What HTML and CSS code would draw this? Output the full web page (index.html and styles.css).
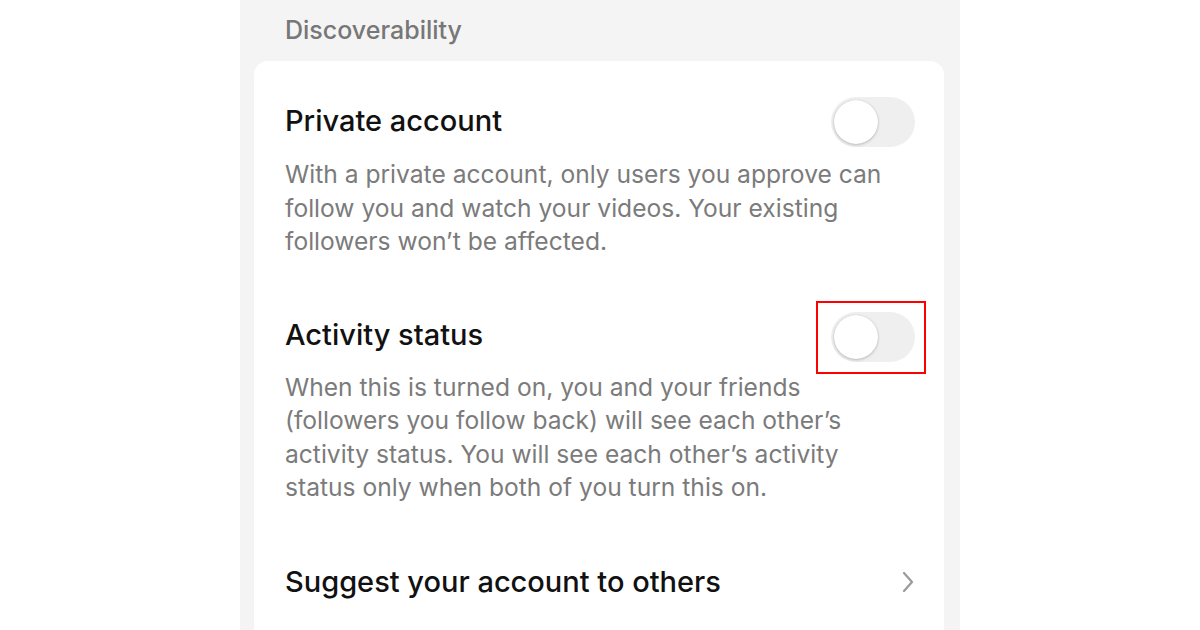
FILE: index.html
```html
<!DOCTYPE html>
<html lang="en">
<head>
<meta charset="utf-8">
<link rel="stylesheet" href="styles.css">
</head>
<body>
<div class="panel">
  <div class="section-title">Discoverability</div>
  <div class="card">
    <div class="item item-private">
      <div class="item-head">
        <div class="item-title">Private account</div>
        <div class="toggle"><span class="knob"></span></div>
      </div>
      <p class="item-desc">With a private account, only users you approve can follow you and watch your videos. Your existing followers won’t be affected.</p>
    </div>
    <div class="item item-activity">
      <div class="item-head">
        <div class="item-title">Activity status</div>
        <div class="highlight"><div class="toggle"><span class="knob"></span></div></div>
      </div>
      <p class="item-desc">When this is turned on, you and your friends (followers you follow back) will see each other’s activity status. You will see each other’s activity status only when both of you turn this on.</p>
    </div>
    <div class="item item-link">
      <div class="item-head">
        <div class="item-title">Suggest your account to others</div>
        <svg class="chevron" width="12" height="22" viewBox="0 0 12 22"><path d="M2 2 L10 11 L2 20" fill="none" stroke="#9a9a9a" stroke-width="2.2" stroke-linecap="round" stroke-linejoin="round"/></svg>
      </div>
    </div>
  </div>
</div>
</body>
</html>
```

FILE: styles.css
```css
html, body {
  margin: 0;
  padding: 0;
  background: #ffffff;
}
body {
  font-family: Inter, "Noto Sans", "Liberation Sans", sans-serif;
  height: 630px;
  overflow: hidden;
}
.panel {
  width: 720px;
  height: 630px;
  margin: 0 auto;
  background: #f4f4f4;
  padding: 0 16px 0 14px;
  box-sizing: border-box;
}
.section-title {
  padding: 15px 0 0 31px;
  font-size: 25px;
  line-height: 30px;
  font-weight: 500;
  color: #777777;
  height: 61px;
  box-sizing: border-box;
}
.card {
  background: #ffffff;
  border-radius: 14px;
  padding: 0 29px 0 31px;
  height: 600px;
}
.item-head {
  display: flex;
  align-items: center;
  justify-content: space-between;
}
.item-title {
  font-size: 29px;
  font-weight: 500;
  color: #111111;
}
.item-private .item-head {
  padding-top: 36px;
  height: 50px;
}
.item-private .item-title {
  margin-bottom: 4px;
}
.item-desc {
  margin: 11px 0 0 0;
  font-size: 24.6px;
  line-height: 33.5px;
  color: #7b7b7b;
  max-width: 630px;
}
.item-activity .item-head {
  margin-top: 51px;
  height: 50px;
}
.item-activity .item-desc {
  margin-top: 11px;
}
.toggle {
  width: 84px;
  height: 50px;
  border-radius: 25px;
  background: #efefef;
  position: relative;
  flex: none;
}
.knob {
  position: absolute;
  left: 3px;
  top: 3px;
  width: 44px;
  height: 44px;
  border-radius: 50%;
  background: #ffffff;
  box-shadow: 0 1px 3px rgba(0,0,0,0.22), 0 0 1px rgba(0,0,0,0.15);
}
.highlight {
  border: 2px solid #ff0000;
  padding: 9px 9px 10px 13px;
  margin-right: -11px;
  margin-top: 5px;
}
.item-link .item-head {
  margin-top: 52px;
  height: 50px;
}
.chevron {
  margin-right: 1px;
}
```
